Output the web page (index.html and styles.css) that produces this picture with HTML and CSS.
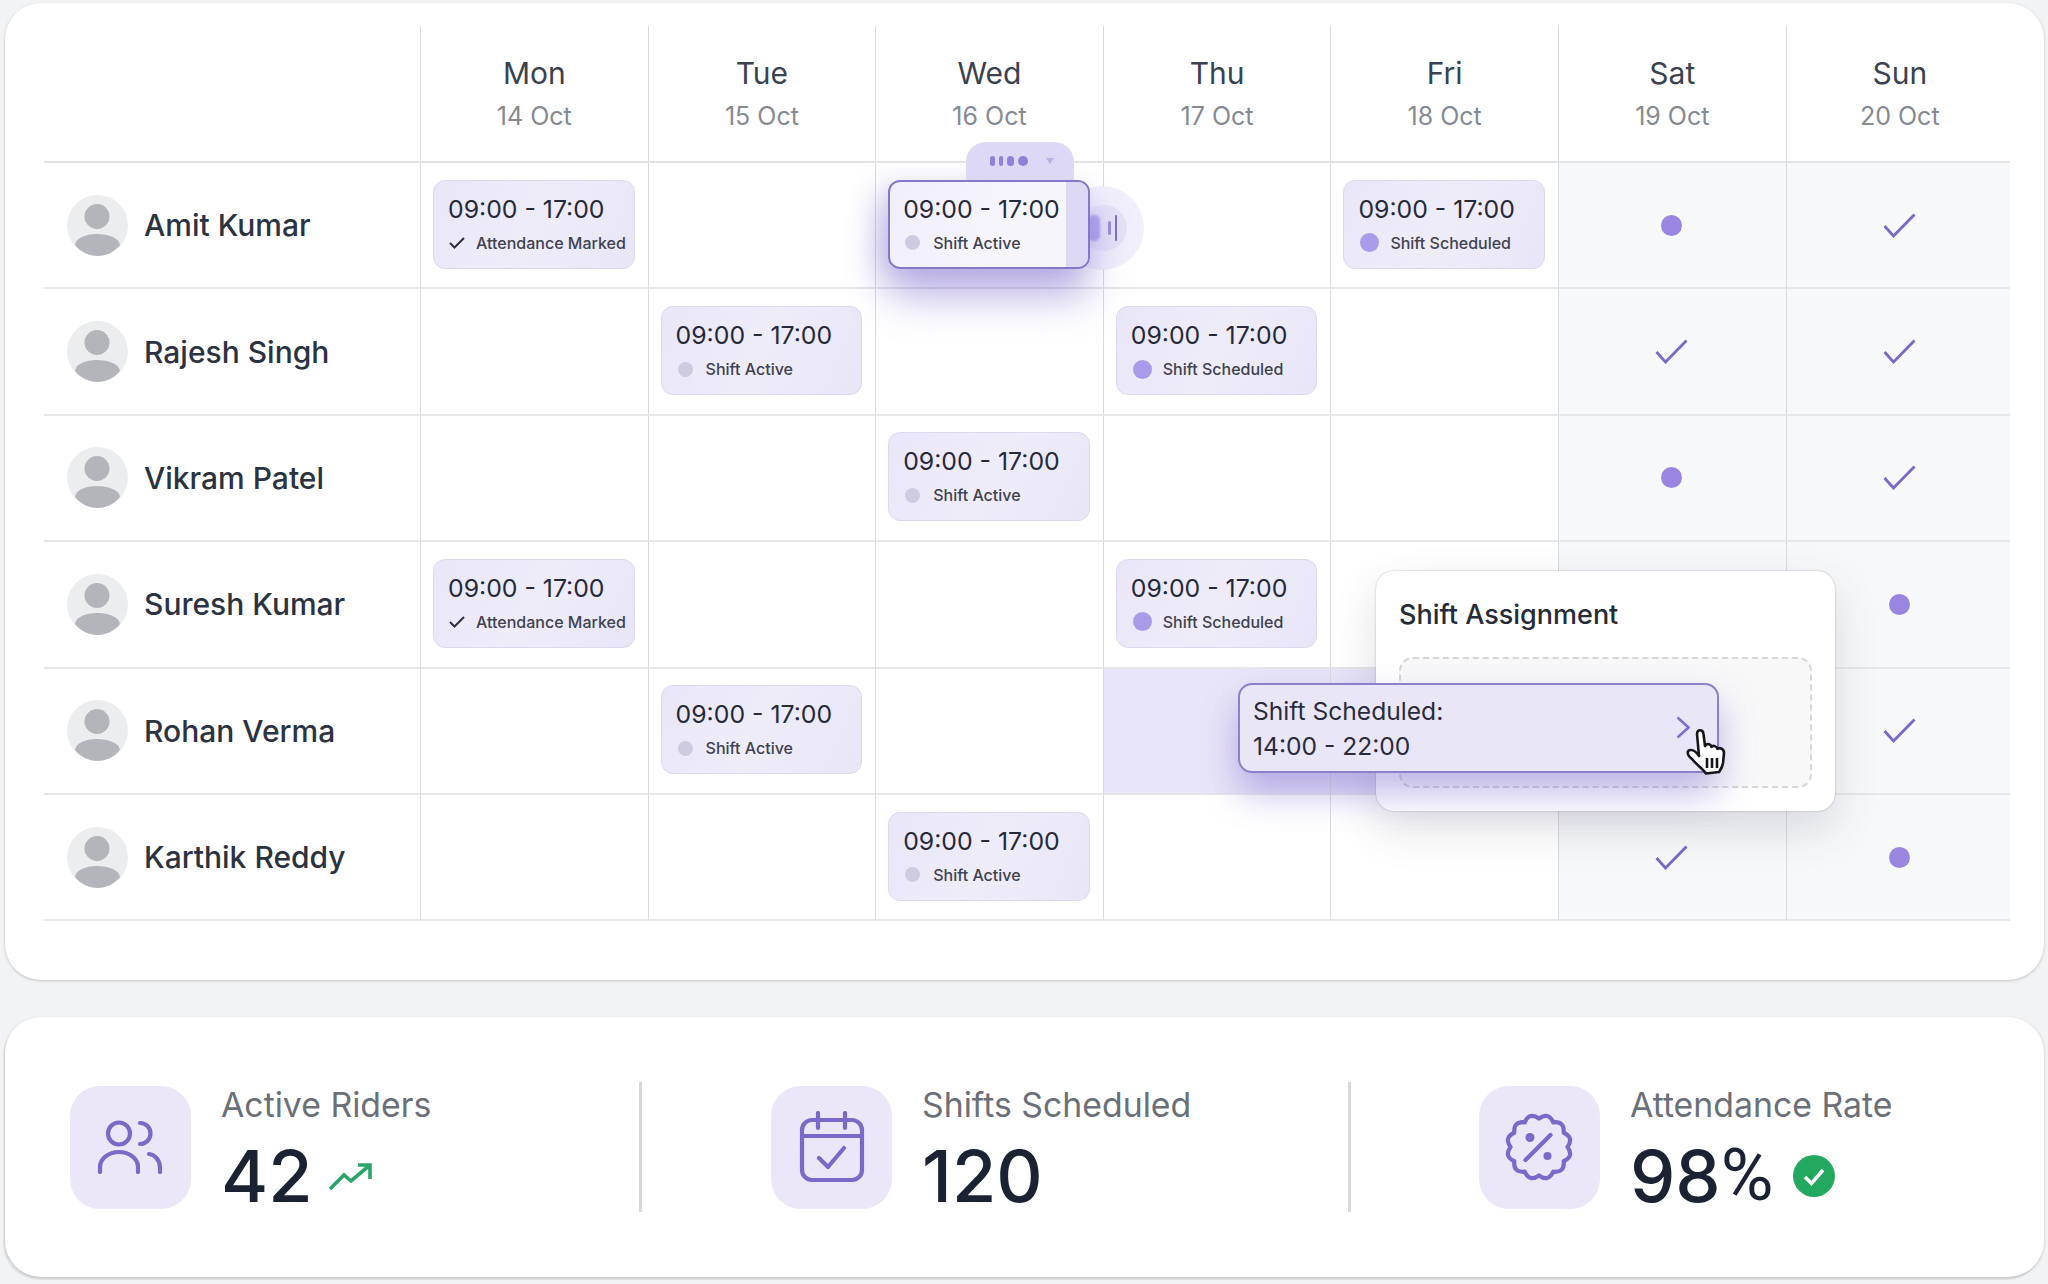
FILE: index.html
```html
<!DOCTYPE html>
<html lang="en">
<head>
  <meta charset="UTF-8" />
  <meta name="viewport" content="width=device-width, initial-scale=1.0"/>
  <title>Rider Shift Schedule</title>
  <link rel="stylesheet" href="styles.css">
</head>
<body>
  <div class="page">
    <section class="board">
      <div class="grid">
        <div class="head-blank"></div>
        <div class="day"><div class="day-name">Mon</div><div class="day-date">14 Oct</div></div>
        <div class="day"><div class="day-name">Tue</div><div class="day-date">15 Oct</div></div>
        <div class="day"><div class="day-name">Wed</div><div class="day-date">16 Oct</div></div>
        <div class="day"><div class="day-name">Thu</div><div class="day-date">17 Oct</div></div>
        <div class="day"><div class="day-name">Fri</div><div class="day-date">18 Oct</div></div>
        <div class="day"><div class="day-name">Sat</div><div class="day-date">19 Oct</div></div>
        <div class="day"><div class="day-name">Sun</div><div class="day-date">20 Oct</div></div>

        <!-- Amit -->
        <div class="rider"><svg class="avatar" viewBox="0 0 61 61"><use href="#avatar"/></svg><span>Amit Kumar</span></div>
        <div class="cell">
          <div class="shift"><div class="time">09:00 - 17:00</div><div class="status"><svg class="tick" viewBox="0 0 16 12"><path d="M1 6l4.500 4.500L15 1"/></svg>Attendance Marked</div></div>
        </div>
        <div class="cell"></div>
        <div class="cell">
          <div class="pulse">
            <div class="pulse-inner"></div>
            <i class="wave wave-a"></i><i class="wave wave-b"></i><i class="wave wave-c"></i>
          </div>
          <div class="shift shift-active">
            <div class="handle">
              <i class="pip pip-a"></i><i class="pip pip-b"></i><i class="pip pip-c"></i><i class="pip pip-d"></i><i class="caret"></i>
            </div>
            <div class="strip"></div>
            <div class="time">09:00 - 17:00</div>
            <div class="status"><i class="dot"></i>Shift Active</div>
          </div>
        </div>
        <div class="cell"></div>
        <div class="cell">
          <div class="shift"><div class="time">09:00 - 17:00</div><div class="status"><i class="dot dot-sched"></i>Shift Scheduled</div></div>
        </div>
        <div class="cell off"><i class="mark-dot"></i></div>
        <div class="cell off"><svg class="mark-check" viewBox="0 0 33 25"><use href="#check"/></svg></div>

        <!-- Rajesh -->
        <div class="rider"><svg class="avatar" viewBox="0 0 61 61"><use href="#avatar"/></svg><span>Rajesh Singh</span></div>
        <div class="cell"></div>
        <div class="cell">
          <div class="shift"><div class="time">09:00 - 17:00</div><div class="status"><i class="dot"></i>Shift Active</div></div>
        </div>
        <div class="cell"></div>
        <div class="cell">
          <div class="shift"><div class="time">09:00 - 17:00</div><div class="status"><i class="dot dot-sched"></i>Shift Scheduled</div></div>
        </div>
        <div class="cell"></div>
        <div class="cell off"><svg class="mark-check" viewBox="0 0 33 25"><use href="#check"/></svg></div>
        <div class="cell off"><svg class="mark-check" viewBox="0 0 33 25"><use href="#check"/></svg></div>

        <!-- Vikram -->
        <div class="rider"><svg class="avatar" viewBox="0 0 61 61"><use href="#avatar"/></svg><span>Vikram Patel</span></div>
        <div class="cell"></div>
        <div class="cell"></div>
        <div class="cell">
          <div class="shift"><div class="time">09:00 - 17:00</div><div class="status"><i class="dot"></i>Shift Active</div></div>
        </div>
        <div class="cell"></div>
        <div class="cell"></div>
        <div class="cell off"><i class="mark-dot"></i></div>
        <div class="cell off"><svg class="mark-check" viewBox="0 0 33 25"><use href="#check"/></svg></div>

        <!-- Suresh -->
        <div class="rider"><svg class="avatar" viewBox="0 0 61 61"><use href="#avatar"/></svg><span>Suresh Kumar</span></div>
        <div class="cell">
          <div class="shift"><div class="time">09:00 - 17:00</div><div class="status"><svg class="tick" viewBox="0 0 16 12"><path d="M1 6l4.500 4.500L15 1"/></svg>Attendance Marked</div></div>
        </div>
        <div class="cell"></div>
        <div class="cell"></div>
        <div class="cell">
          <div class="shift"><div class="time">09:00 - 17:00</div><div class="status"><i class="dot dot-sched"></i>Shift Scheduled</div></div>
        </div>
        <div class="cell"></div>
        <div class="cell off"></div>
        <div class="cell off"><i class="mark-dot"></i></div>

        <!-- Rohan -->
        <div class="rider"><svg class="avatar" viewBox="0 0 61 61"><use href="#avatar"/></svg><span>Rohan Verma</span></div>
        <div class="cell"></div>
        <div class="cell">
          <div class="shift"><div class="time">09:00 - 17:00</div><div class="status"><i class="dot"></i>Shift Active</div></div>
        </div>
        <div class="cell"></div>
        <div class="cell drop"></div>
        <div class="cell drop"></div>
        <div class="cell off"></div>
        <div class="cell off"><svg class="mark-check" viewBox="0 0 33 25"><use href="#check"/></svg></div>

        <!-- Karthik -->
        <div class="rider"><svg class="avatar" viewBox="0 0 61 61"><use href="#avatar"/></svg><span>Karthik Reddy</span></div>
        <div class="cell"></div>
        <div class="cell"></div>
        <div class="cell">
          <div class="shift"><div class="time">09:00 - 17:00</div><div class="status"><i class="dot"></i>Shift Active</div></div>
        </div>
        <div class="cell"></div>
        <div class="cell"></div>
        <div class="cell off"><svg class="mark-check" viewBox="0 0 33 25"><use href="#check"/></svg></div>
        <div class="cell off"><i class="mark-dot"></i></div>
      </div>

      <div class="popup">
        <h3>Shift Assignment</h3>
        <div class="dropzone"></div>
      </div>

      <div class="drag-card">
        <div>Shift Scheduled:</div>
        <div>14:00 - 22:00</div>
        <svg class="chevron" viewBox="0 0 14 23"><path d="M1.500 1.500L12.500 11.500L1.500 21.500"/></svg>
        <svg class="hand" viewBox="0 0 44 47">
          <path class="hand-body" d="M12 6C12 1 18 1 18.500 6L20 18C22 15 26 16 26.500 19C28 17 32 18 32.500 21C35 19 39 21 39 25L38 35C37.500 39 36 41 34 44L21 45.500C18 41 12 37 7 31C1 26 2 22 6 22C9 22 12 25 14 28Z"/>
          <path class="hand-lines" d="M22 30V40M27 30V40M32 30V40"/>
        </svg>
      </div>
    </section>

    <section class="stats">
      <div class="stat stat-riders">
        <div class="stat-icon">
          <svg class="icon-people" viewBox="0 0 68 54"><path d="M24 2.500a11 11 0 1 1 0 22a11 11 0 1 1 0-22zM5 52v-5a19 15 0 0 1 38 0v5M45 3a10.500 10.500 0 0 1 0 21M54 34a12 14 0 0 1 11 13v5"/></svg>
        </div>
        <div class="stat-text">
          <div class="stat-label">Active Riders</div>
          <div class="stat-value">42<svg class="trend" viewBox="0 0 46 29"><path d="M2 27L16 13L23 19L42 3M30 3H42V17"/></svg></div>
        </div>
      </div>
      <div class="divider"></div>
      <div class="stat stat-shifts">
        <div class="stat-icon">
          <svg class="icon-cal" viewBox="0 0 70 72"><path d="M15 9h40a10 10 0 0 1 10 10v40a10 10 0 0 1-10 10H15a10 10 0 0 1-10-10V19a10 10 0 0 1 10-10zM21 2v15M48 2v15M5 25h60M22 47l9 9l16-19"/></svg>
        </div>
        <div class="stat-text">
          <div class="stat-label">Shifts Scheduled</div>
          <div class="stat-value">120</div>
        </div>
      </div>
      <div class="divider"></div>
      <div class="stat stat-rate">
        <div class="stat-icon">
          <svg class="icon-badge" viewBox="-2 -2 74 74">
            <path d="M63.500 35Q70.260 44.450 59.680 49.250Q60.810 60.810 49.250 59.680Q44.450 70.260 35 63.500Q25.550 70.260 20.750 59.680Q9.190 60.810 10.320 49.250Q-.26 44.450 6.500 35Q-.26 25.550 10.320 20.750Q9.190 9.190 20.750 10.320Q25.550 -.26 35 6.500Q44.450 -.26 49.250 10.320Q60.810 9.190 59.680 20.750Q70.260 25.550 63.500 35ZM21.500 48L46.500 23"/>
            <circle class="fill" cx="26" cy="25.500" r="4.500"/>
            <circle class="fill" cx="43.500" cy="44" r="4"/>
          </svg>
        </div>
        <div class="stat-text">
          <div class="stat-label">Attendance Rate</div>
          <div class="stat-value">98<span class="pct">%</span><svg class="ok" viewBox="0 0 42 42"><circle cx="21" cy="21" r="21"/><path d="M12 22l6.500 6.500L30 15"/></svg></div>
        </div>
      </div>
    </section>
  </div>

  <!-- shared shapes -->
  <svg class="defs" width="0" height="0">
    <defs>
      <g id="avatar">
        <circle cx="30.500" cy="30.500" r="30.500" fill="#ecedee"/>
        <circle cx="30" cy="21.500" r="12.500" fill="#b4b5bb"/>
        <path d="M8 50C9 43 18 39 30 39C42 39 52 43 53 50C47 57 39 61 30.500 61C22 61 14 57 8 50Z" fill="#b4b5bb"/>
      </g>
      <path id="check" d="M1.500 13L10.500 23L31.500 1.500" fill="none" stroke="#7a69c9" stroke-width="2.800"/>
    </defs>
  </svg>
</body>
</html>
```

FILE: styles.css
```css
* {
  box-sizing: border-box;
}
html, body {
  margin: 0;
  height: 1284px;
  overflow: hidden;
}
body {
  font-family: Inter, "Liberation Sans", sans-serif;
  background: #f2f3f4;
  color: #262b38;
}
.page {
  padding: 3px 4px 0 5px;
}
.defs {
  position: absolute;
}

/* schedule board */
.board {
  position: relative;
  height: 977px;
  padding: 23px 34px 0 39px;
  background: #fff;
  border-radius: 36px;
  box-shadow: 0 1px 3px rgba(60, 60, 70, 0.28);
}
.grid {
  display: grid;
  grid-template-columns: 376px repeat(6, 227.600px) 1fr;
  grid-template-rows: 137px repeat(6, 126.400px);
}
.head-blank {
  border-bottom: 2px solid #e2e3e5;
}
.day {
  padding-top: 29px;
  text-align: center;
  border-left: 1px solid #d8dadd;
  border-bottom: 2px solid #e2e3e5;
}
.day-name {
  font-size: 30px;
  line-height: 36px;
  font-weight: 400;
  color: #3a424f;
}
.day-date {
  margin-top: 10px;
  font-size: 25px;
  line-height: 30px;
  color: #868a90;
}
.rider {
  display: flex;
  align-items: center;
  gap: 16px;
  padding-left: 23px;
  font-size: 30px;
  font-weight: 450;
  color: #2b3240;
  border-bottom: 2px solid #e6e7e9;
}
.avatar {
  width: 61px;
  height: 61px;
}
.cell {
  position: relative;
  display: flex;
  align-items: center;
  justify-content: center;
  padding: 0 13px 0 12px;
  border-left: 1px solid #d8dadd;
  border-bottom: 2px solid #e6e7e9;
}
.cell.off {
  background: #f7f8f9;
}
.cell.drop {
  background: #e9e5f8;
}
/* last column stops a little short of the others, keep its content in line */
.grid > :nth-child(8n) {
  padding-left: 3px;
}
.grid > .cell:nth-child(8n) {
  padding-left: 15px;
}

/* shift cards */
.shift {
  width: 100%;
  height: 89px;
  margin-bottom: 2px;
  padding: 12px 0 0 14px;
  background: linear-gradient(115deg, #e9e6f8, #efecfa 50%, #e8e5f7);
  border: 1px solid #dcd9ef;
  border-radius: 12px;
}
.time {
  font-size: 24.800px;
  line-height: 32px;
  color: #25293a;
}
.status {
  display: flex;
  align-items: center;
  margin-top: 7px;
  font-size: 16px;
  line-height: 22px;
  font-weight: 500;
  color: #40424f;
  white-space: nowrap;
}
.dot {
  width: 15px;
  height: 15px;
  margin: 0 13px 0 2px;
  background: #cdcbdf;
  border-radius: 50%;
}
.dot-sched {
  width: 19px;
  height: 19px;
  margin-right: 11px;
  background: #a99be9;
}
.tick {
  width: 16px;
  height: 12px;
  margin: 0 11px 0 1px;
  fill: none;
  stroke: #30303c;
  stroke-width: 2;
}
.mark-dot {
  width: 21px;
  height: 21px;
  background: #9a85e0;
  border-radius: 50%;
}
.mark-check {
  width: 33px;
  height: 25px;
}

/* the card being dragged out of Wed */
.shift-active {
  position: relative;
  z-index: 3;
  padding: 11px 0 0 13px;
  border: 2px solid #8478c9;
  background: linear-gradient(115deg, #f0eefb, #f6f5fc 60%);
  box-shadow: 0 30px 40px rgba(112, 92, 200, 0.38), -10px 8px 30px rgba(112, 92, 200, 0.28);
}
.strip {
  position: absolute;
  top: 0;
  right: 0;
  bottom: 0;
  width: 22px;
  background: #dcd7f3;
  border-radius: 0 10px 10px 0;
}
.handle {
  position: absolute;
  top: -40px;
  left: 76px;
  display: flex;
  align-items: center;
  width: 108px;
  height: 38px;
  padding-left: 24px;
  background: #ddd8f5;
  border-radius: 20px 20px 0 0;
}
.pip {
  height: 10px;
  margin-right: 4px;
  background: #8f80d8;
  border-radius: 5px;
}
.pip-a { width: 5px; }
.pip-b { width: 4px; }
.pip-c { width: 7px; }
.pip-d { width: 10px; margin-right: 0; }
.caret {
  margin-left: 18px;
  border-style: solid;
  border-width: 6px 4px 0;
  border-color: #b9b0e4 transparent transparent;
}
.pulse {
  position: absolute;
  z-index: 2;
  top: 23px;
  left: 184px;
  width: 84px;
  height: 84px;
  background: #f2effc;
  border-radius: 50%;
}
.pulse-inner {
  position: absolute;
  top: 19px;
  left: 21px;
  width: 46px;
  height: 46px;
  background: #e6e2f8;
  border-radius: 50%;
}
.wave {
  position: absolute;
  background: #b5a9ee;
  border-radius: 5px;
}
.wave-a { top: 29px; left: 28px; width: 12px; height: 26px; filter: blur(1px); }
.wave-b { top: 35px; left: 48px; width: 3px; height: 14px; background: #9d90d8; }
.wave-c { top: 29px; left: 55px; width: 2px; height: 26px; background: #7c70c4; }

/* assignment popup */
.popup {
  position: absolute;
  z-index: 4;
  top: 568px;
  left: 1371px;
  width: 459px;
  height: 240px;
  padding: 24px 23px 0 23px;
  background: #fff;
  border-radius: 18px;
  box-shadow: 0 0 2px rgba(50, 50, 60, 0.35), 0 18px 44px rgba(60, 60, 90, 0.16);
}
.popup h3 {
  margin: 0;
  font-size: 27px;
  line-height: 40px;
  font-weight: 550;
  color: #262b38;
}
.dropzone {
  height: 131px;
  margin-top: 22px;
  background: #f8f8f9;
  border: 2px dashed #d6d6da;
  border-radius: 14px;
}
.drag-card {
  position: absolute;
  z-index: 5;
  top: 680px;
  left: 1233px;
  width: 481px;
  height: 90px;
  padding: 9px 0 0 13px;
  font-size: 24.600px;
  line-height: 35px;
  color: #2a2b3d;
  background: #e9e6f7;
  border: 2px solid #8c81c9;
  border-radius: 14px;
  box-shadow: 0 20px 36px rgba(110, 90, 200, 0.42);
}
.chevron {
  position: absolute;
  top: 31px;
  left: 436px;
  width: 14px;
  height: 23px;
  fill: none;
  stroke: #8070cb;
  stroke-width: 2.600;
}
.hand {
  position: absolute;
  top: 43px;
  left: 445px;
  width: 44px;
  height: 47px;
}
.hand-body {
  fill: #fff;
  stroke: #16161c;
  stroke-width: 2.600;
  stroke-linejoin: round;
}
.hand-lines {
  fill: none;
  stroke: #16161c;
  stroke-width: 2.600;
}

/* summary strip */
.stats {
  display: flex;
  align-items: center;
  height: 260px;
  margin-top: 37px;
  padding-left: 65px;
  background: #fff;
  border-radius: 36px;
  box-shadow: 0 1px 3px rgba(60, 60, 70, 0.28), -2px 3px 0 #e6e7e8;
}
.stat {
  display: flex;
  align-items: center;
  gap: 30px;
}
.stat-riders { width: 569px; }
.stat-shifts { width: 577px; margin-left: 129px; }
.stat-rate { margin-left: 128px; }
.divider {
  width: 3px;
  height: 130px;
  background: #d6d8da;
}
.stat-icon {
  display: flex;
  align-items: center;
  justify-content: center;
  width: 121px;
  height: 123px;
  background: #ebe7f9;
  border-radius: 30px;
}
.stat-icon svg {
  fill: none;
  stroke: #7b68c8;
  stroke-width: 4.200;
  stroke-linecap: round;
  stroke-linejoin: round;
}
.stat-icon svg .fill {
  fill: #7b68c8;
  stroke: none;
}
.icon-people { width: 68px; height: 54px; margin-right: 3px; }
.icon-cal { width: 70px; height: 72px; }
.icon-badge { width: 74px; height: 74px; margin-right: 2px; }
.stat-text {
  padding-top: 4px;
}
.stat-label {
  font-size: 33.800px;
  line-height: 44px;
  color: #6b7078;
}
.stat-value {
  display: flex;
  align-items: center;
  margin-top: 9px;
  font-size: 72px;
  line-height: 80px;
  font-weight: 500;
  color: #1a2233;
}
.pct {
  font-family: Roboto, sans-serif;
  font-weight: 400;
}
.trend {
  width: 46px;
  height: 29px;
  margin: 2px 0 0 15px;
  fill: none;
  stroke: #2aa66a;
  stroke-width: 3.600;
}
.ok {
  width: 42px;
  height: 42px;
  margin-left: 20px;
  fill: #22a85f;
}
.ok path {
  fill: none;
  stroke: #fff;
  stroke-width: 3.500;
}
```
